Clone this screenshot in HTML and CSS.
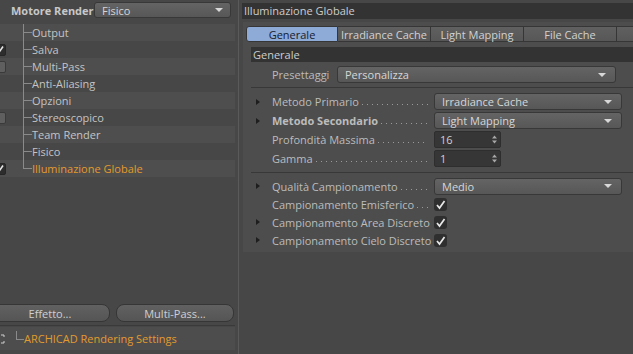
FILE: index.html
```html
<!DOCTYPE html>
<html>
<head>
<meta charset="utf-8">
<link rel="stylesheet" href="styles.css">
</head>
<body>
<div class="app">
  <div class="left">
    <div class="lhead">
      <span class="lhead-label">Motore Render</span>
      <div class="dd dd-engine"><span>Fisico</span><i class="arrow"></i></div>
    </div>
    <div class="tree">
      <div class="trow alt"><span class="chk"></span><span class="branch"></span><span class="tlabel">Output</span></div>
      <div class="trow"><span class="chk on"><svg width="13" height="12" viewBox="0 0 13 12"><path d="M3.5 6.5 L5.5 9 L10 2.5" fill="none" stroke="#e6e6e6" stroke-width="1.6"/></svg></span><span class="branch"></span><span class="tlabel">Salva</span></div>
      <div class="trow alt"><span class="chk off"></span><span class="branch"></span><span class="tlabel">Multi-Pass</span></div>
      <div class="trow"><span class="chk"></span><span class="branch"></span><span class="tlabel">Anti-Aliasing</span></div>
      <div class="trow alt"><span class="chk"></span><span class="branch"></span><span class="tlabel">Opzioni</span></div>
      <div class="trow"><span class="chk off"></span><span class="branch"></span><span class="tlabel">Stereoscopico</span></div>
      <div class="trow alt"><span class="chk"></span><span class="branch"></span><span class="tlabel">Team Render</span></div>
      <div class="trow"><span class="chk"></span><span class="branch"></span><span class="tlabel">Fisico</span></div>
      <div class="trow alt"><span class="chk on"><svg width="13" height="12" viewBox="0 0 13 12"><path d="M3.5 6.5 L5.5 9 L10 2.5" fill="none" stroke="#e6e6e6" stroke-width="1.6"/></svg></span><span class="branch last"></span><span class="tlabel orange">Illuminazione Globale</span></div>
    </div>
    <div class="spacer"></div>
    <div class="btnrow">
      <div class="btn btn-effetto">Effetto...</div>
      <div class="btn btn-mp">Multi-Pass...</div>
    </div>
    <div class="lsep"></div>
    <div class="archi">
      <svg class="archi-icon" width="10" height="10" viewBox="0 0 10 10"><path d="M0 1 H3 V3 M0 9 H3 V7 M6 1 H9 V3 M6 9 H9 V7" fill="none" stroke="#d0d0d0" stroke-width="1"/></svg>
      <span class="branch-l"></span>
      <span class="orange">ARCHICAD Rendering Settings</span>
    </div>
  </div>

  <div class="right">
    <div class="rhead">Illuminazione Globale</div>
    <div class="group">
      <div class="tabs">
        <div class="tab sel">Generale</div>
        <div class="tab">Irradiance Cache</div>
        <div class="tab">Light Mapping</div>
        <div class="tab">File Cache</div>
        <div class="tab tab-rest"></div>
      </div>
      <div class="sect">Generale</div>
      <div class="preset">
        <span class="preset-label">Presettaggi</span>
        <div class="dd dd-preset"><span>Personalizza</span><i class="arrow"></i></div>
      </div>
      <div class="rsep"></div>
      <div class="rows rows-a">
        <div class="row"><span class="tri"></span><span class="lbl"><span>Metodo Primario</span><span class="dots"></span></span><div class="dd dd-val"><span>Irradiance Cache</span><i class="arrow"></i></div></div>
        <div class="row"><span class="tri"></span><span class="lbl"><span class="bold">Metodo Secondario</span><span class="dots"></span></span><div class="dd dd-val"><span>Light Mapping</span><i class="arrow"></i></div></div>
        <div class="row"><span class="tri none"></span><span class="lbl"><span>Profondità Massima</span><span class="dots"></span></span><div class="num"><span>16</span><svg width="5" height="9" viewBox="0 0 5 9"><path d="M0 3.5 L2.5 0.5 L5 3.5 Z M0 5.5 L2.5 8.5 L5 5.5 Z" fill="#a8a8a8"/></svg></div></div>
        <div class="row"><span class="tri none"></span><span class="lbl"><span>Gamma</span><span class="dots"></span></span><div class="num"><span>1</span><svg width="5" height="9" viewBox="0 0 5 9"><path d="M0 3.5 L2.5 0.5 L5 3.5 Z M0 5.5 L2.5 8.5 L5 5.5 Z" fill="#a8a8a8"/></svg></div></div>
      </div>
      <div class="rsep"></div>
      <div class="rows rows-b">
        <div class="row row-b"><span class="tri"></span><span class="lbl"><span>Qualità Campionamento</span><span class="dots"></span></span><div class="dd dd-val"><span>Medio</span><i class="arrow"></i></div></div>
        <div class="row row-b"><span class="tri none"></span><span class="lbl"><span>Campionamento Emisferico</span><span class="dots"></span></span><span class="cb"><svg width="13" height="13" viewBox="0 0 13 13"><path d="M3 7 L5.5 10 L10.5 3" fill="none" stroke="#e8e8e8" stroke-width="1.7"/></svg></span></div>
        <div class="row row-b"><span class="tri"></span><span class="lbl"><span>Campionamento Area Discreto</span><span class="dots"></span></span><span class="cb"><svg width="13" height="13" viewBox="0 0 13 13"><path d="M3 7 L5.5 10 L10.5 3" fill="none" stroke="#e8e8e8" stroke-width="1.7"/></svg></span></div>
        <div class="row row-b"><span class="tri"></span><span class="lbl"><span>Campionamento Cielo Discreto</span><span class="dots"></span></span><span class="cb"><svg width="13" height="13" viewBox="0 0 13 13"><path d="M3 7 L5.5 10 L10.5 3" fill="none" stroke="#e8e8e8" stroke-width="1.7"/></svg></span></div>
      </div>
    </div>
  </div>
</div>
</body>
</html>
```

FILE: styles.css
```css
html, body {
  margin: 0;
  padding: 0;
}
body {
  width: 633px;
  height: 354px;
  overflow: hidden;
  background: #474747;
  font-family: "Open Sans", "Noto Sans", sans-serif;
  font-size: 11px;
  color: #c8c8c8;
}
.app {
  display: flex;
  height: 354px;
}

/* ---------- left ---------- */
.left {
  width: 238px;
  flex: none;
  border-right: 1px solid #5a5a5a;
  display: flex;
  flex-direction: column;
  overflow: hidden;
}
.lhead {
  display: flex;
  align-items: center;
  height: 16px;
  margin-top: 2px;
  margin-bottom: 6px;
}
.lhead-label {
  font-weight: bold;
  margin-left: 11px;
  width: 83px;
  flex: none;
}
.dd {
  box-sizing: border-box;
  display: flex;
  align-items: center;
  justify-content: space-between;
  background: linear-gradient(#646464, #575757);
  border: 1px solid #383838;
  border-radius: 3px;
  padding: 0 7px 0 7px;
  color: #d6d6d6;
  flex: none;
}
.dd-engine {
  width: 137px;
  height: 16px;
}
.arrow {
  width: 0;
  height: 0;
  border-left: 4px solid transparent;
  border-right: 4px solid transparent;
  border-top: 4px solid #d8d8d8;
}
.tree {
  display: flex;
  flex-direction: column;
}
.trow {
  display: flex;
  align-items: center;
  height: 17px;
  margin-right: 3px;
  line-height: 17px;
}
.trow.alt {
  background: #4e4e4e;
}
.chk {
  width: 13px;
  height: 12px;
  margin-left: -7px;
  box-sizing: border-box;
  border-radius: 2px;
  flex: none;
  display: flex;
}
.chk.on {
  background: #2d2d2d;
  border: 1px solid #262626;
}
.chk.on svg {
  margin: -1px;
}
.chk.off {
  background: #5f5f5f;
  border: 1px solid #3a3a3a;
}
.branch {
  width: 9px;
  height: 17px;
  margin-left: 17px;
  flex: none;
  background:
    linear-gradient(#8a8a8a, #8a8a8a) 0 8px / 9px 1px no-repeat,
    linear-gradient(#8a8a8a, #8a8a8a) 0 0 / 1px 100% no-repeat;
}
.branch.last {
  background:
    linear-gradient(#8a8a8a, #8a8a8a) 0 8px / 9px 1px no-repeat,
    linear-gradient(#8a8a8a, #8a8a8a) 0 0 / 1px 9px no-repeat;
}
.tlabel {
  color: #c4c4c4;
}
.orange {
  color: #e39b2d !important;
}
.spacer {
  flex: 1;
}
.btnrow {
  display: flex;
  gap: 6px;
  margin-left: -10px;
  height: 18px;
  margin-bottom: 3px;
}
.btn {
  box-sizing: border-box;
  height: 18px;
  border-radius: 8px;
  background: linear-gradient(#616161, #555555);
  border: 1px solid #363636;
  display: flex;
  align-items: center;
  justify-content: center;
  color: #cfcfcf;
  flex: none;
}
.btn-effetto {
  width: 120px;
}
.btn-mp {
  width: 118px;
}
.lsep {
  height: 1px;
  background: #3a3a3a;
  margin-right: 3px;
}
.archi {
  display: flex;
  align-items: center;
  height: 23px;
  margin-top: 1px;
  margin-bottom: 4px;
  margin-right: 3px;
  background: #4d4d4d;
}
.archi-icon {
  margin-left: -5px;
  flex: none;
}
.branch-l {
  width: 8px;
  height: 23px;
  margin-left: 11px;
  flex: none;
  background:
    linear-gradient(#8a8a8a, #8a8a8a) 0 12px / 8px 1px no-repeat,
    linear-gradient(#8a8a8a, #8a8a8a) 0 4px / 1px 9px no-repeat;
}

/* ---------- right ---------- */
.right {
  flex: 1;
  display: flex;
  flex-direction: column;
  padding-top: 3px;
  overflow: hidden;
}
.rhead {
  height: 16px;
  line-height: 16px;
  background: #333333;
  margin-left: 3px;
  padding-left: 2px;
  color: #cdcdcd;
}
.group {
  margin: 3px 0 0 4px;
  background: #4d4d4d;
  padding: 4px 0 3px 3px;
}
.tabs {
  display: flex;
  height: 16px;
}
.tab {
  box-sizing: border-box;
  width: 93px;
  height: 16px;
  flex: none;
  background: linear-gradient(#606060, #575757);
  border: 1px solid #363636;
  border-left: none;
  display: flex;
  align-items: center;
  justify-content: center;
  color: #d2d2d2;
}
.tab.sel {
  width: 92px;
  background: #8eaad7;
  border-left: 1px solid #363636;
  border-radius: 3px 0 0 3px;
  color: #15202e;
}
.tab-rest {
  width: 20px;
}
.sect {
  margin: 5px 0 0 5px;
  height: 15px;
  line-height: 15px;
  background: #333333;
  padding-left: 2px;
  color: #cdcdcd;
}
.preset {
  display: flex;
  align-items: center;
  height: 17px;
  margin-top: 4px;
  padding-left: 26px;
}
.preset-label {
  width: 65px;
  flex: none;
  color: #bcbcbc;
}
.dd-preset {
  width: 279px;
  height: 17px;
  padding-right: 9px;
}
.rsep {
  height: 1px;
  background: #383838;
  margin: 4px 0 0 5px;
}
.rows {
  margin-top: 4px;
  display: flex;
  flex-direction: column;
}
.row {
  display: flex;
  align-items: center;
  height: 19px;
  padding-left: 10px;
}
.row-b {
  height: 18px;
}
.tri {
  width: 0;
  height: 0;
  border-top: 3px solid transparent;
  border-bottom: 3px solid transparent;
  border-left: 4px solid #1e1e1e;
  margin-right: 12px;
  flex: none;
}
.tri.none {
  border-left-color: transparent;
}
.lbl {
  width: 162px;
  flex: none;
  display: flex;
  align-items: center;
  color: #bcbcbc;
  white-space: nowrap;
  overflow: hidden;
}
.bold {
  font-weight: bold;
}
.dots {
  flex: 1;
  height: 1px;
  margin: 6px 6px 0 3px;
  background: linear-gradient(to right, #9a9a9a 1px, transparent 1px) 0 0 / 5px 1px repeat-x;
}
.dd-val {
  width: 188px;
  height: 17px;
  padding-right: 9px;
}
.num {
  box-sizing: border-box;
  width: 67px;
  height: 17px;
  background: #363636;
  border: 1px solid #2e2e2e;
  border-radius: 2px;
  display: flex;
  align-items: center;
  justify-content: space-between;
  padding: 0 3px 0 5px;
  color: #d0d0d0;
  flex: none;
}
.cb {
  box-sizing: border-box;
  width: 13px;
  height: 13px;
  background: #2f2f2f;
  border-radius: 3px;
  display: flex;
  flex: none;
}
```
